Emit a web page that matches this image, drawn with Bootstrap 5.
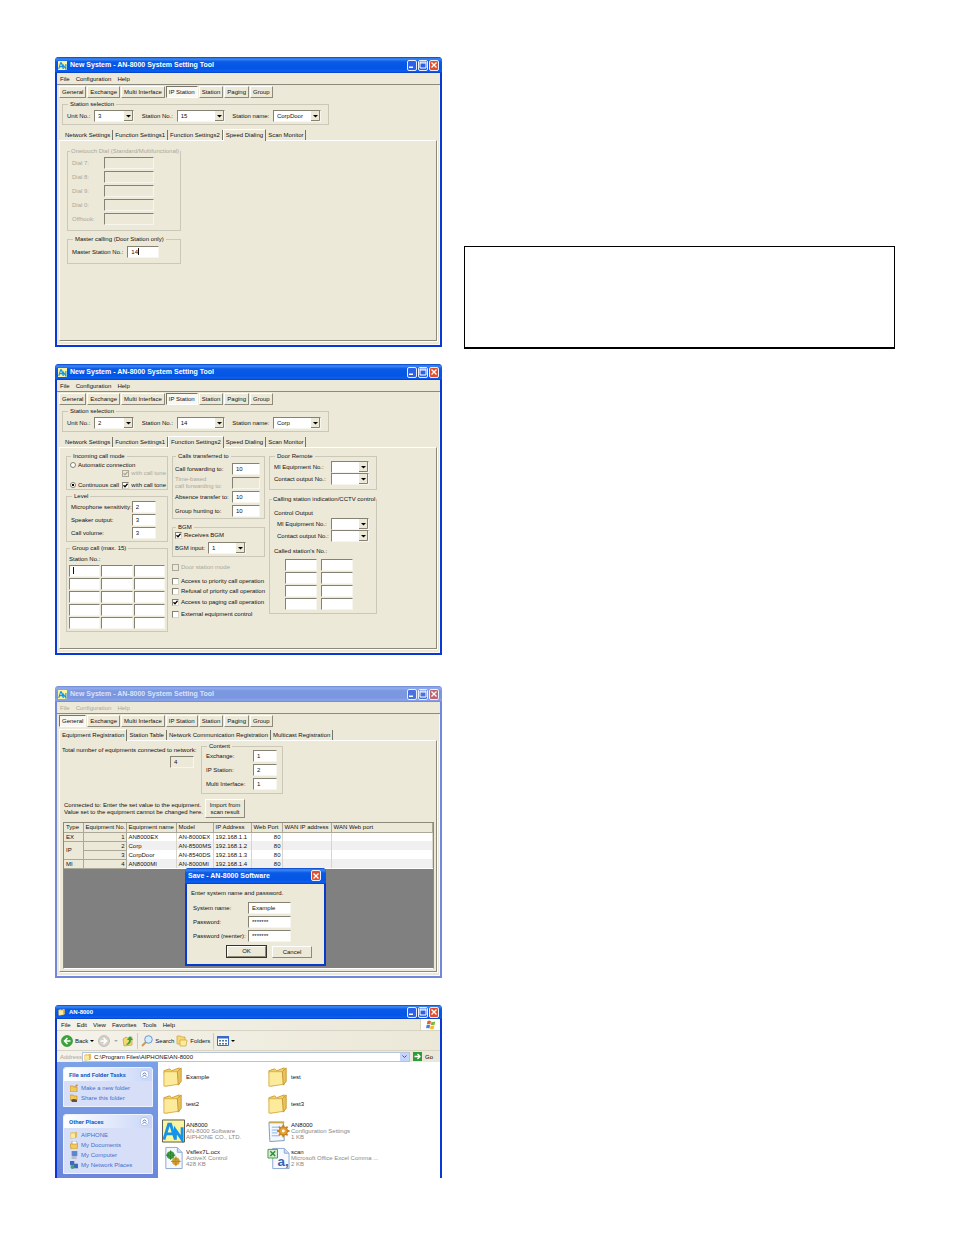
<!DOCTYPE html>
<html lang="en">
<head>
<meta charset="utf-8">
<meta name="viewport" content="width=device-width, initial-scale=1">
<title>AN-8000 System Setting Tool</title>
<link href="https://cdn.jsdelivr.net/npm/bootstrap@5.3.0/dist/css/bootstrap.min.css" rel="stylesheet">
<style>
body{font-family:"Liberation Sans",Arial,sans-serif;font-size:6px;line-height:8px;color:#111;background:#fff}
.sheet{display:grid;grid-template-columns:387fr 431fr;column-gap:22px;padding:57px 59px 57px 55px;align-items:start}
.note-box{margin-top:189px;min-height:103px;border:1px solid #000;border-bottom-width:2px}
h2{font-size:7px;line-height:8px;margin:0;font-weight:bold}
label{white-space:nowrap}

/* window frame */
.xp{display:flex;flex-direction:column;background:#ece9d8;border:solid #0839d8;border-width:0 2px 2px;border-radius:4px 4px 0 0;min-width:0}
.xp-tall{min-height:290px}
.xp-tall.faded{min-height:292px}
.xp-title{height:16px;margin:0 -2px;padding:0 3px;display:flex;align-items:center;gap:3px;color:#fff;border-radius:4px 4px 0 0;background:linear-gradient(#0a3fc4,#3b8cf8 12%,#0a5ae6 30%,#0555e6 75%,#0a62f4 88%,#0a3cc0)}
.xp-title svg{flex:none}
.xp-title button{width:10px;height:11px;padding:0;border:1px solid #e8f0ff;border-radius:2px;background:#2e62e6;display:flex;align-items:center;justify-content:center}
.xp-title button.shut{background:#e0502e}
.xp-btns{display:flex;gap:1px;margin-left:auto}
.faded{border-color:#7186dd}
.faded>.xp-title{background:linear-gradient(#6f88d4,#93aeee 12%,#7b97e0 30%,#7b97e0 75%,#8ba6ec 88%,#6f86d2);color:#d9e3fb}
.faded>.xp-title button{background:#4a72dc}
.faded>.xp-title button.shut{background:#bd6470}
.xp-menu{height:12px;display:flex;align-items:center;gap:6px;padding:0 3px;border-bottom:1px solid #8d8a7c}
.xp-menu a,.places a{color:inherit;text-decoration:none}
.faded .xp-menu{color:#aca899}
.xp-in{flex:1;display:flex;flex-direction:column;padding:1px 2px 3px;border:solid #faf9f3;border-width:0 1px 1px 0}

/* toolbar, tabs */
.tools{display:flex;gap:1px}
.key{height:12px;padding:0 2px;font-size:6px;line-height:8px;color:#111;background:#ece9d8;border:1px solid;border-color:#fff #8d8a7c #8d8a7c #fff;border-radius:0;white-space:nowrap}
.key.on{background:#f8f7f1;border-color:#77746a #fff #fff #77746a}
.pages{display:flex;position:relative;margin-bottom:-1px;z-index:1}
.pages button{height:10px;margin-top:1px;padding:0 2px;font-size:6px;line-height:8px;color:#111;background:transparent;border:0;border-right:1px solid #77746a;white-space:nowrap}
.pages button.on{height:12px;margin-top:0;padding:0 2px 2px;background:#ece9d8;border-left:1px solid #fff;border-top:1px solid #fff}
.leaf{flex:1;border:1px solid;border-color:#fff #8d8a7c #8d8a7c #fff;box-shadow:1px 1px #fff;min-height:0}

/* form parts */
fieldset{border:1px solid #cbc8ba;padding:0 4px;min-width:0}
legend{float:none;width:auto;margin:0 0 0 1px;padding:0 2px;font-size:6px;line-height:8px;white-space:nowrap}
legend.snug{margin-left:-2px;padding:0 1px}
.box{width:24px;height:12px;padding:0 3px;font-size:6px;line-height:8px;color:#111;background-color:#fff;border:1px solid;border-color:#858273 #f7f6ee #f7f6ee #858273;border-radius:0;flex:none;display:block}
.box:disabled{background-color:#ece9d8;color:#111;opacity:1}
select.box{appearance:none;width:40px;background-repeat:no-repeat;background-position:right center;background-image:url("data:image/svg+xml,%3Csvg xmlns='http://www.w3.org/2000/svg' width='9' height='10'%3E%3Cpath d='M0 0h9v10H0z' fill='%23ece9d8'/%3E%3Cpath d='M8.500 0v9.500H0' fill='none' stroke='%23858273'/%3E%3Cpath d='M2 4h5L4.500 6.500z' fill='%23000'/%3E%3C/svg%3E")}
.caret{background-image:linear-gradient(#111,#111);background-size:1px 7px;background-repeat:no-repeat;background-position:3px 1px}
.caret.after{background-position:10px 1px}
.tick{appearance:none;flex:none;width:7px;height:7px;margin:0;background:#fff center/5px 5px no-repeat;border:1px solid;border-color:#858273 #d8d5c6 #d8d5c6 #858273}
.tick:checked{background-image:url("data:image/svg+xml,%3Csvg xmlns='http://www.w3.org/2000/svg' viewBox='0 0 5 5'%3E%3Cpath d='M.5 2.300l1.500 1.500L4.600.8' fill='none' stroke='%23000' stroke-width='1.300'/%3E%3C/svg%3E")}
.tick:disabled{background-color:#ece9d8;border-color:#aca899}
.tick:disabled:checked{background-image:url("data:image/svg+xml,%3Csvg xmlns='http://www.w3.org/2000/svg' viewBox='0 0 5 5'%3E%3Cpath d='M.5 2.300l1.500 1.500L4.600.8' fill='none' stroke='%23aca899' stroke-width='1.300'/%3E%3C/svg%3E")}
.dot{appearance:none;flex:none;width:6px;height:6px;margin:0;border:1px solid #858273;border-radius:50%;background:#fff}
.dot:checked{background:radial-gradient(#000 45%,#fff 55%)}
.off{color:#aca899}
.pair{display:flex;align-items:center;justify-content:space-between;height:12px}
.opt{display:flex;align-items:center;gap:2px;height:8px}
.pick{width:267px;margin:2px 0 4px 3px;padding:2px 7px 2px 4px}
.w-48{width:48px!important}

.dial{width:114px;margin-left:7px}
.dial .box{width:50px}
.dial .pair{margin-bottom:2px;padding-right:22px}
.cells{display:grid;row-gap:1px}
.cells .box{width:auto;min-width:0}

/* equipment table */
.well{flex:1;background:#808080;margin:0 2px 2px 3px;border:1px solid #8d8a7c;border-bottom-color:#fff;display:flex;flex-direction:column;align-items:center}
.kit{width:100%;table-layout:fixed;border-collapse:collapse;background:#fff;line-height:8px}
.kit td,.kit th{height:9px;padding:0 1px 0 2px;border-right:1px solid #d8d6cc;font-weight:normal;overflow:hidden;white-space:nowrap}
.kit thead th{height:9px;background:#ece9d8;border-right:1px solid #aca899;border-bottom:1px solid #aca899}
.kit tbody th{background:#ece9d8;border-bottom:1px solid #aca899;border-right-color:#aca899}
.kit .alt td{background:#f0f0f0}
.kit .n{text-align:right}
.dlg{width:141px;border-color:#0839c8;margin:-1px 0 0 14px}
.dlg .xp-title{padding-right:5px}
.dlg .box{width:43px}
.ok{outline:1px solid #333}

/* explorer */
.exp{background:#fff;border-bottom:0}
.exp .xp-title{height:14px}
.exp-bar{display:flex;align-items:center;background:linear-gradient(90deg,#f4f2ea,#ebe8d8)}
.exp-menu{height:12px;padding-left:4px;gap:6px;border-bottom:1px solid #d8d4c4}
.flag{margin-left:auto;align-self:stretch;width:20px;background:#fff;border-left:1px solid #d8d4c4;display:flex;align-items:center;justify-content:center}
.exp-tools{height:20px;padding-left:4px;border-bottom:1px solid #d8d4c4}
.exp-tools button{display:flex;align-items:center;gap:2px;border:0;background:none;padding:0;font-size:6px;line-height:8px;color:#111}
.exp-sep{width:1px;height:16px;background:#d0ccba;margin:0 3px}
.exp-addr{height:11px;padding-left:3px}
.addr-box{flex:1;display:flex;align-items:center;height:10px;background:#fff;margin-left:0;padding-left:1px;border:1px solid #b8c4d8}
.addr-box input{flex:1;min-width:0;height:8px;border:0;padding:0 2px;font-size:6px;line-height:8px;color:#111;background:none}
.addr-box button{width:9px;height:8px;padding:0;border:0;background:#c4d4fa;display:flex;align-items:center;justify-content:center}
.side{width:101px;flex:none;padding:5px 5px 4px 6px;background:linear-gradient(#7ba2e7,#6b86dc)}
.task{background:#d6dff7;border:1px solid #eef2fd;border-radius:3px 3px 0 0;color:#3f6fcf}
.task+.task{margin-top:7px}
.task-head{display:flex;align-items:center;justify-content:space-between;height:13px;padding:0 3px 0 5px;background:linear-gradient(90deg,#fff,#c9d6f8);color:#215dc6;border-radius:3px 3px 0 0}
.task-head h3{margin:0;font:bold 6px/8px Roboto,sans-serif}
.places{list-style:none;margin:0;padding:2px 0 3px 6px}
.places li{display:flex;align-items:center;gap:3px;height:10px}
.files{flex:1;display:grid;grid-template-columns:105px 1fr;grid-auto-rows:27px;padding:1px 0 0 4px;align-content:start}
.doc{display:flex;align-items:center;gap:1px;line-height:6px;color:#888}
.doc svg{flex:none}
.doc b{font-weight:normal;color:#111;display:block}
</style>
</head>
<body>
<svg width="0" height="0" class="d-none" aria-hidden="true">
  <symbol id="an" viewBox="0 0 24 24"><path fill="#fbf5a0" d="M0 0h24v24H0z"/><path d="M2 21 7 5h2l5 16M4 15h7M14 21V11l7 10V8" fill="none" stroke="#1493ea" stroke-width="3"/></symbol>
  <symbol id="min" viewBox="0 0 8 8"><path d="M1 5.500h4v1.500H1z" fill="#fff"/></symbol>
  <symbol id="max" viewBox="0 0 8 8"><path d="M1 1h6v6H1zM1 2h6" fill="none" stroke="#fff"/></symbol>
  <symbol id="x" viewBox="0 0 8 8"><path d="m1.500 1.500 5 5m0-5-5 5" stroke="#fff" stroke-width="1.300"/></symbol>
  <symbol id="fold" viewBox="0 0 24 24"><path d="M2 6 8 4l2 2 8-3v15L4 22z" fill="#f4d268" stroke="#cda03a"/><path d="M2 7h14l2 13-13 2H2z" fill="#fdeb9c" stroke="#d9b04a"/><path d="m16 7 4-4v14l-3 4z" fill="#e9c258" stroke="#c99a38"/></symbol>
  <symbol id="up" viewBox="0 0 10 10"><circle cx="5" cy="5" r="4.500" fill="#fff" stroke="#a9bdea"/><path d="m3 5 2-2 2 2M3 7.500l2-2 2 2" fill="none" stroke="#3c62b8"/></symbol>
</svg>

<main class="sheet">
<div class="d-flex flex-column">

<!-- Speed dialing -->
<section class="xp xp-tall">
  <header class="xp-title"><svg width="9" height="9"><use href="#an"/></svg><h2>New System - AN-8000 System Setting Tool</h2>
    <div class="xp-btns"><button aria-label="Minimize"><svg width="8" height="8"><use href="#min"/></svg></button><button aria-label="Maximize"><svg width="8" height="8"><use href="#max"/></svg></button><button class="shut" aria-label="Close"><svg width="8" height="8"><use href="#x"/></svg></button></div></header>
  <nav class="xp-menu"><a href="#">File</a><a href="#">Configuration</a><a href="#">Help</a></nav>
  <div class="xp-in">
    <div class="tools"><button class="key">General</button><button class="key">Exchange</button><button class="key">Multi Interface</button><button class="key on">IP Station</button><button class="key">Station</button><button class="key">Paging</button><button class="key">Group</button></div>
    <fieldset class="pick"><legend>Station selection</legend><div class="d-flex align-items-center justify-content-between">
      <label for="u1">Unit No.:</label><select id="u1" class="box"><option>3</option></select>
      <label for="s1" class="ms-1">Station No.:</label><select id="s1" class="box w-48"><option>15</option></select>
      <label for="n1" class="ms-1">Station name:</label><select id="n1" class="box w-48"><option>CorpDoor</option></select></div></fieldset>
    <div class="pages ps-1"><button>Network Settings</button><button>Function Settings1</button><button>Function Settings2</button><button class="on">Speed Dialing</button><button>Scan Monitor</button></div>
    <div class="leaf">
      <fieldset class="dial off" style="margin-top:6px;padding-top:2px;padding-bottom:3px"><legend class="snug">Onetouch Dial (Standard/Multifunctional)</legend>
        <div class="pair"><label for="d7">Dial 7:</label><input id="d7" class="box" disabled></div>
        <div class="pair"><label for="d8">Dial 8:</label><input id="d8" class="box" disabled></div>
        <div class="pair"><label for="d9">Dial 9:</label><input id="d9" class="box" disabled></div>
        <div class="pair"><label for="d0">Dial 0:</label><input id="d0" class="box" disabled></div>
        <div class="pair"><label for="dh">Offhook:</label><input id="dh" class="box" disabled></div></fieldset>
      <fieldset class="dial" style="margin-top:4px;padding-top:3px;padding-bottom:5px"><legend>Master calling (Door Station only)</legend>
        <div class="d-flex align-items-center" style="gap:4px"><label for="ms">Master Station No.:</label><input id="ms" class="box caret after" style="width:32px" value="14"></div></fieldset>
    </div>
  </div>
</section>

<!-- Function settings 2 -->
<section class="xp xp-tall" style="margin-top:17px">
  <header class="xp-title"><svg width="9" height="9"><use href="#an"/></svg><h2>New System - AN-8000 System Setting Tool</h2>
    <div class="xp-btns"><button aria-label="Minimize"><svg width="8" height="8"><use href="#min"/></svg></button><button aria-label="Maximize"><svg width="8" height="8"><use href="#max"/></svg></button><button class="shut" aria-label="Close"><svg width="8" height="8"><use href="#x"/></svg></button></div></header>
  <nav class="xp-menu"><a href="#">File</a><a href="#">Configuration</a><a href="#">Help</a></nav>
  <div class="xp-in">
    <div class="tools"><button class="key">General</button><button class="key">Exchange</button><button class="key">Multi Interface</button><button class="key on">IP Station</button><button class="key">Station</button><button class="key">Paging</button><button class="key">Group</button></div>
    <fieldset class="pick"><legend>Station selection</legend><div class="d-flex align-items-center justify-content-between">
      <label for="u2">Unit No.:</label><select id="u2" class="box"><option>2</option></select>
      <label for="s2" class="ms-1">Station No.:</label><select id="s2" class="box w-48"><option>14</option></select>
      <label for="n2" class="ms-1">Station name:</label><select id="n2" class="box w-48"><option>Corp</option></select></div></fieldset>
    <div class="pages ps-1"><button>Network Settings</button><button>Function Settings1</button><button class="on">Function Settings2</button><button>Speed Dialing</button><button>Scan Monitor</button></div>
    <div class="leaf d-flex align-items-start" style="padding:4px 6px 16px;gap:4px">
      <div style="width:102px">
        <fieldset style="padding:1px 1px 0 3px"><legend>Incoming call mode</legend>
          <div class="opt"><input type="radio" class="dot" name="mode" id="auto"><label for="auto">Automatic connection</label></div>
          <div class="opt off justify-content-end"><input type="checkbox" class="tick" id="t1" checked disabled><label for="t1">with call tone</label></div>
          <div class="d-flex justify-content-between mt-1"><div class="opt"><input type="radio" class="dot" name="mode" id="cont" checked><label for="cont">Continuous call</label></div><div class="opt"><input type="checkbox" class="tick" id="t2" checked><label for="t2">with call tone</label></div></div></fieldset>
        <fieldset style="margin-top:2px;padding:1px 12px 2px 4px"><legend>Level</legend><div class="cells">
          <div class="pair"><label for="l1">Microphone sensitivity:</label><input id="l1" class="box" style="width:24px" value="2"></div>
          <div class="pair"><label for="l2">Speaker output:</label><input id="l2" class="box" style="width:24px" value="3"></div>
          <div class="pair"><label for="l3">Call volume:</label><input id="l3" class="box" style="width:24px" value="3"></div></div></fieldset>
        <fieldset style="margin-top:2px;padding:3px 2px 2px"><legend>Group call (max. 15)</legend><div id="gl" style="margin-bottom:2px">Station No.:</div>
          <div class="cells" style="grid-template-columns:repeat(3,1fr);column-gap:1px" role="group" aria-labelledby="gl">
            <input class="box caret" aria-label="1"><input class="box" aria-label="2"><input class="box" aria-label="3"><input class="box" aria-label="4"><input class="box" aria-label="5"><input class="box" aria-label="6"><input class="box" aria-label="7"><input class="box" aria-label="8"><input class="box" aria-label="9"><input class="box" aria-label="10"><input class="box" aria-label="11"><input class="box" aria-label="12"><input class="box" aria-label="13"><input class="box" aria-label="14"><input class="box" aria-label="15"></div></fieldset>
      </div>
      <div style="width:93px">
        <fieldset style="padding:3px 4px 1px 2px"><legend>Calls transferred to</legend><div class="d-grid" style="gap:2px">
          <div class="pair"><label for="c1">Call forwarding to:</label><input id="c1" class="box" style="width:28px" value="10"></div>
          <div class="pair off"><label for="c2" style="line-height:7px">Time-based<br>call forwarding to:</label><input id="c2" class="box" style="width:28px" disabled></div>
          <div class="pair"><label for="c3">Absence transfer to:</label><input id="c3" class="box" style="width:28px" value="10"></div>
          <div class="pair"><label for="c4">Group hunting to:</label><input id="c4" class="box" style="width:28px" value="10"></div></div></fieldset>
        <fieldset style="margin-top:4px;padding:0 2px 2px"><legend>BGM</legend>
          <div class="opt"><input type="checkbox" class="tick" id="bg" checked><label for="bg">Receives BGM</label></div>
          <div class="d-flex align-items-center" style="gap:3px;margin-top:3px"><label for="bi">BGM input:</label><select id="bi" class="box" style="width:38px"><option>1</option></select></div></fieldset>
        <div class="opt off" style="margin-top:6px"><input type="checkbox" class="tick" id="o1" disabled><label for="o1">Door station mode</label></div>
        <div class="opt" style="margin-top:6px"><input type="checkbox" class="tick" id="o2"><label for="o2">Access to priority call operation</label></div>
        <div class="opt" style="margin-top:2px"><input type="checkbox" class="tick" id="o3"><label for="o3">Refusal of priority call operation</label></div>
        <div class="opt" style="margin-top:3px"><input type="checkbox" class="tick" id="o4" checked><label for="o4">Access to paging call operation</label></div>
        <div class="opt" style="margin-top:4px"><input type="checkbox" class="tick" id="o5"><label for="o5">External equipment control</label></div>
      </div>
      <div style="width:108px">
        <fieldset style="padding:1px 7px 4px 4px"><legend>Door Remote</legend>
          <div class="pair"><label for="m1">MI Equipment No.:</label><select id="m1" class="box" style="width:38px"></select></div>
          <div class="pair"><label for="m2">Contact output No.:</label><select id="m2" class="box" style="width:38px"></select></div></fieldset>
        <fieldset style="margin-top:5px;padding:6px 7px 3px 4px"><legend class="snug">Calling station indication/CCTV control</legend>
          <div>Control Output</div>
          <div style="padding:1px 0 5px 3px"><div class="pair"><label for="m3">MI Equipment No.:</label><select id="m3" class="box" style="width:38px"></select></div>
          <div class="pair"><label for="m4">Contact output No.:</label><select id="m4" class="box" style="width:38px"></select></div></div>
          <div id="cs">Called station's No.:</div>
          <div class="cells" style="grid-template-columns:32px 32px;column-gap:4px;margin:4px 0 0 11px" role="group" aria-labelledby="cs"><input class="box" aria-label="1"><input class="box" aria-label="2"><input class="box" aria-label="3"><input class="box" aria-label="4"><input class="box" aria-label="5"><input class="box" aria-label="6"><input class="box" aria-label="7"><input class="box" aria-label="8"></div></fieldset>
      </div>
    </div>
  </div>
</section>

<!-- Equipment registration, with the save dialog open -->
<section class="xp faded xp-tall" style="margin-top:31px">
  <header class="xp-title"><svg width="9" height="9"><use href="#an"/></svg><h2>New System - AN-8000 System Setting Tool</h2>
    <div class="xp-btns"><button aria-label="Minimize"><svg width="8" height="8"><use href="#min"/></svg></button><button aria-label="Maximize"><svg width="8" height="8"><use href="#max"/></svg></button><button class="shut" aria-label="Close"><svg width="8" height="8"><use href="#x"/></svg></button></div></header>
  <nav class="xp-menu"><a href="#">File</a><a href="#">Configuration</a><a href="#">Help</a></nav>
  <div class="xp-in">
    <div class="tools" style="margin-bottom:2px"><button class="key on">General</button><button class="key">Exchange</button><button class="key">Multi Interface</button><button class="key">IP Station</button><button class="key">Station</button><button class="key">Paging</button><button class="key">Group</button></div>
    <div class="pages"><button class="on">Equipment Registration</button><button>Station Table</button><button>Network Communication Registration</button><button>Multicast Registration</button></div>
    <div class="leaf d-flex flex-column">
      <div class="d-flex" style="padding:1px 0 3px 2px;gap:5px">
        <div style="width:134px;padding-top:4px"><label for="tot">Total number of equipments connected to network:</label><input id="tot" class="box ms-auto" style="margin:2px 2px 0" value="4" disabled></div>
        <fieldset style="width:82px;padding:0 5px 3px 4px"><legend>Content</legend><div class="d-grid" style="gap:2px">
          <div class="pair"><label for="e1">Exchange:</label><input id="e1" class="box" value="1"></div>
          <div class="pair"><label for="e2">IP Station:</label><input id="e2" class="box" value="2"></div>
          <div class="pair"><label for="e3">Multi Interface:</label><input id="e3" class="box" value="1"></div></div></fieldset>
      </div>
      <div class="d-flex align-items-center" style="padding:2px 0 4px 4px;gap:2px"><div style="line-height:7px;width:139px;white-space:nowrap">Connected to: Enter the set value to the equipment.<br>Value set to the equipment cannot be changed here.</div><button class="key" style="height:19px;width:40px;line-height:7px">Import from<br>scan result</button></div>
      <div class="well">
        <table class="kit"><colgroup><col style="width:19px"><col style="width:43px"><col style="width:50px"><col style="width:37px"><col style="width:38px"><col style="width:31px"><col style="width:49px"><col></colgroup>
          <thead><tr><th>Type</th><th>Equipment No.</th><th>Equipment name</th><th>Model</th><th>IP Address</th><th>Web Port</th><th>WAN IP address</th><th>WAN Web port</th></tr></thead>
          <tbody>
          <tr><th>EX</th><th class="n">1</th><td>AN8000EX</td><td>AN-8000EX</td><td>192.168.1.1</td><td class="n">80</td><td></td><td></td></tr>
          <tr class="alt"><th rowspan="2">IP</th><th class="n">2</th><td>Corp</td><td>AN-8500MS</td><td>192.168.1.2</td><td class="n">80</td><td></td><td></td></tr>
          <tr><th class="n">3</th><td>CorpDoor</td><td>AN-8540DS</td><td>192.168.1.3</td><td class="n">80</td><td></td><td></td></tr>
          <tr class="alt"><th>MI</th><th class="n">4</th><td>AN8000MI</td><td>AN-8000MI</td><td>192.168.1.4</td><td class="n">80</td><td></td><td></td></tr>
          </tbody></table>
        <div class="xp dlg" role="dialog" aria-label="Save">
          <header class="xp-title"><h2>Save - AN-8000 Software</h2><div class="xp-btns"><button class="shut" aria-label="Close"><svg width="8" height="8"><use href="#x"/></svg></button></div></header>
          <div style="padding:5px 4px 6px">
            <div>Enter system name and password.</div>
            <div class="d-grid" style="gap:2px;padding:5px 29px 4px 2px">
              <div class="pair"><label for="p1">System name:</label><input id="p1" class="box" value="Example"></div>
              <div class="pair"><label for="p2">Password:</label><input id="p2" class="box" value="*******"></div>
              <div class="pair"><label for="p3">Password (reenter):</label><input id="p3" class="box" value="*******"></div></div>
            <div class="d-flex justify-content-end" style="gap:6px;padding-right:8px"><button class="key ok" style="width:39px;height:11px">OK</button><button class="key" style="width:40px">Cancel</button></div>
          </div>
        </div>
      </div>
    </div>
  </div>
</section>

<!-- Explorer -->
<section class="xp exp" style="margin-top:27px">
  <header class="xp-title"><svg width="8" height="8"><use href="#fold"/></svg><h2 style="font-size:6px">AN-8000</h2>
    <div class="xp-btns"><button aria-label="Minimize"><svg width="8" height="8"><use href="#min"/></svg></button><button aria-label="Maximize"><svg width="8" height="8"><use href="#max"/></svg></button><button class="shut" aria-label="Close"><svg width="8" height="8"><use href="#x"/></svg></button></div></header>
  <nav class="exp-bar exp-menu"><a class="text-reset text-decoration-none" href="#">File</a><a class="text-reset text-decoration-none" href="#">Edit</a><a class="text-reset text-decoration-none" href="#">View</a><a class="text-reset text-decoration-none" href="#">Favorites</a><a class="text-reset text-decoration-none" href="#">Tools</a><a class="text-reset text-decoration-none" href="#">Help</a>
    <span class="flag"><svg width="10" height="10" viewBox="0 0 10 10"><path d="M1.500 1q2-1 3.500.2L4.300 4.500Q2.700 3.500.8 4.300z" fill="#e8612c"/><path d="M5.500 1.400q1.500 1 3.700.1L8.500 5q-2 .8-3.700-.2z" fill="#7cb83c"/><path d="M.7 5q1.800-.8 3.400.2L3.400 8.500Q2 7.500 0 8.300z" fill="#3f7fe0"/><path d="M4.700 5.500q1.500 1 3.700.2L7.600 9Q5.500 9.800 4 8.800z" fill="#f4b92c"/></svg></span></nav>
  <div class="exp-bar exp-tools">
    <button><svg width="12" height="12" viewBox="0 0 12 12"><circle cx="6" cy="6" r="5.500" fill="#3aa63a" stroke="#2a8030" stroke-width=".6"/><path d="M6.500 3 3.500 6l3 3M3.500 6h6" fill="none" stroke="#fff" stroke-width="1.500"/></svg>Back</button>
    <svg style="margin:0 4px 0 2px" width="4" height="4" viewBox="0 0 4 4"><path d="M0 1h4L2 3z"/></svg>
    <button aria-label="Forward"><svg width="12" height="12" viewBox="0 0 12 12"><circle cx="6" cy="6" r="5.500" fill="#d4d3cb" stroke="#aaa9a0" stroke-width=".6"/><path d="m5.500 3 3 3-3 3M8.500 6h-6" fill="none" stroke="#fff" stroke-width="1.500"/></svg></button>
    <svg style="margin:0 4px" width="4" height="4" viewBox="0 0 4 4"><path d="M0 1h4L2 3z" fill="#aaa"/></svg>
    <button aria-label="Up"><svg width="12" height="12" viewBox="0 0 12 12"><path d="M1 4 4 2l1 1 5-1v8L2 11z" fill="#f6d872" stroke="#c99a38" stroke-width=".7"/><path d="M4 9q3-1 3-4h-2l3-4 3 4H9q0 4-4 5z" fill="#36a336"/></svg></button>
    <span class="exp-sep"></span>
    <button><svg width="12" height="12" viewBox="0 0 12 12"><path d="M5 7 1 11" stroke="#d09a50" stroke-width="2"/><circle cx="7.500" cy="4.500" r="3.800" fill="#d4ecfc" stroke="#6a96cc"/></svg>Search</button>
    <button style="margin-left:2px"><svg width="12" height="12" viewBox="0 0 12 12"><path d="M1 1h4l1 1h3v7H1z" fill="#f6d872" stroke="#cda03a" stroke-width=".7"/><path d="M4 5h7l-1 6H4z" fill="#fdeb9c" stroke="#cda03a" stroke-width=".7"/></svg>Folders</button>
    <span class="exp-sep"></span>
    <button aria-label="Views"><svg width="12" height="10" viewBox="0 0 12 10"><path d="M.5.5h11v9H.5z" fill="#fff" stroke="#3a68c8"/><path d="M0 0h12v2.500H0z" fill="#3a68c8"/><path d="M2 4h2v1.500H2zM5 4h2v1.500H5zM8 4h2v1.500H8zM2 7h2v1.500H2zM5 7h2v1.500H5zM8 7h2v1.500H8z" fill="#4a7a9c"/></svg><svg width="4" height="4" viewBox="0 0 4 4"><path d="M0 1h4L2 3z"/></svg></button>
  </div>
  <div class="exp-bar exp-addr"><label class="off" for="path">Address</label>
    <div class="addr-box"><svg width="8" height="8"><use href="#fold"/></svg><input id="path" value="C:\Program Files\AIPHONE\AN-8000"><button aria-label="Open list"><svg width="5" height="5" viewBox="0 0 5 5"><path d="m.5 1.500 2 2 2-2" fill="none" stroke="#3a5a9c"/></svg></button></div>
    <button class="d-flex align-items-center border-0 bg-transparent p-0" style="gap:3px;margin:0 7px 0 3px;font-size:6px"><svg width="9" height="9" viewBox="0 0 9 9"><path d="M0 0h9v9H0z" fill="#2f9a3a"/><path d="M1.500 4.500h5M4.500 2l2.500 2.500L4.500 7" fill="none" stroke="#fff" stroke-width="1.300"/></svg>Go</button></div>
  <div class="d-flex">
    <aside class="side">
      <div class="task"><div class="task-head"><h3>File and Folder Tasks</h3><svg width="9" height="9"><use href="#up"/></svg></div>
        <ul class="places"><li><svg width="8" height="8" viewBox="0 0 8 8"><path d="M0 2h3l1 1h3v5H0z" fill="#f3c957" stroke="#b88a2c" stroke-width=".6"/><path d="m4 3 3-3 1 2z" fill="#e8802c"/></svg><a href="#">Make a new folder</a></li>
        <li><svg width="8" height="8" viewBox="0 0 8 8"><path d="M0 1h3l1 1h3v4H0z" fill="#f3c957" stroke="#b88a2c" stroke-width=".6"/><path d="M1 6q3-2 6 0v2H2z" fill="#6a5030"/></svg><a href="#">Share this folder</a></li></ul></div>
      <div class="task"><div class="task-head"><h3>Other Places</h3><svg width="9" height="9"><use href="#up"/></svg></div>
        <ul class="places"><li><svg width="8" height="8"><use href="#fold"/></svg><a href="#">AIPHONE</a></li>
        <li><svg width="8" height="8" viewBox="0 0 8 8"><path d="M2 0h4l1 1v4H2z" fill="#fff" stroke="#88a" stroke-width=".6"/><path d="M0 3h8L7 8H1z" fill="#f0cc60" stroke="#b88a2c" stroke-width=".6"/></svg><a href="#">My Documents</a></li>
        <li><svg width="8" height="8" viewBox="0 0 8 8"><path d="M2 0h5v5H2z" fill="#4a8ae0" stroke="#889" stroke-width=".8"/><path d="M1 6h5l1 2H2z" fill="#bbc"/></svg><a href="#">My Computer</a></li>
        <li><svg width="8" height="8" viewBox="0 0 8 8"><path d="M0 0h4v4H0zM4 3h4v4H4z" fill="#2f6ad8" stroke="#668" stroke-width=".6"/><circle cx="2.500" cy="6" r="2" fill="#3aa66a"/></svg><a href="#">My Network Places</a></li></ul></div>
    </aside>
    <div class="files">
      <div class="doc"><svg width="23" height="23"><use href="#fold"/></svg><b>Example</b></div>
      <div class="doc"><svg width="23" height="23"><use href="#fold"/></svg><b>test</b></div>
      <div class="doc"><svg width="23" height="23"><use href="#fold"/></svg><b>test2</b></div>
      <div class="doc"><svg width="23" height="23"><use href="#fold"/></svg><b>test3</b></div>
      <div class="doc"><svg width="23" height="24" viewBox="0 0 24 24"><use href="#an"/><path d="M.5.500h23v23H.5z" fill="none" stroke="#555"/></svg><span><b>AN8000</b>AN-8000 Software<br>AIPHONE CO., LTD.</span></div>
      <div class="doc"><svg width="23" height="24" viewBox="0 0 24 24"><path d="M2 3h15l1 19-15 1z" fill="#f4f9ff" stroke="#8098b8"/><path d="M2 2h16v2H2z" fill="#c8a84a"/><path d="M5 8h8M5 11h7M5 14h6M5 17h8" stroke="#88b0e8"/><circle cx="17" cy="12" r="4.500" fill="#e8a030" stroke="#b87418"/><path d="M17 5.500v3m0 7v3M10.500 12h3m7 0h3M12.500 7.500l2 2m5 5 2 2m0-9-2 2m-5 5-2 2" stroke="#c88422" stroke-width="2"/><circle cx="17" cy="12" r="1.500" fill="#fff"/></svg><span><b>AN8000</b>Configuration Settings<br>1 KB</span></div>
      <div class="doc"><svg width="23" height="24" viewBox="0 0 24 24"><path d="M4 1h12l5 5v17H4z" fill="#f4f8ff" stroke="#8ea6d0"/><path d="M16 1v5h5" fill="#cfdcf4" stroke="#8ea6d0"/><circle cx="9" cy="9" r="2.500" fill="none" stroke="#3a9a3a" stroke-width="3"/><path d="M9 4v10M4 9h10" stroke="#2a7a2a"/><circle cx="14.500" cy="15.500" r="2.500" fill="none" stroke="#d0a030" stroke-width="3"/><path d="M14.500 10.500v10m-5-5h10" stroke="#b08020"/></svg><span><b>Vsflex7L.ocx</b>ActiveX Control<br>428 KB</span></div>
      <div class="doc"><svg width="23" height="24" viewBox="0 0 24 24"><path d="M6 2h12l5 5v16H6z" fill="#f6f9ff" stroke="#8ea6d0"/><path d="M18 2v5h5" fill="#cfdcf4" stroke="#8ea6d0"/><path d="M1 3h10v9H1z" fill="#d4ecd0" stroke="#4a9a4a"/><path d="m3.500 5 5 5m0-5-5 5" stroke="#2f8a3a" stroke-width="1.500"/><text x="11" y="20" font-family="Liberation Sans" font-weight="bold" font-size="14" fill="#3a62b0">a,</text></svg><span><b>scan</b>Microsoft Office Excel Comma ...<br>2 KB</span></div>
    </div>
  </div>
</section>
</div>

<aside class="note-box" aria-label="Note"></aside>
</main>
<script src="https://cdn.jsdelivr.net/npm/bootstrap@5.3.0/dist/js/bootstrap.bundle.min.js"></script>
</body>
</html>
